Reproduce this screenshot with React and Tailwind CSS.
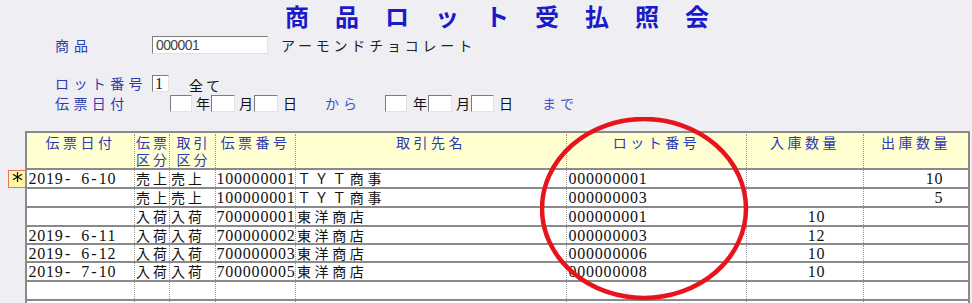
import React from "react";

const rows = [
  { d: "2019- 6-10", k1: "売上", k2: "売上", no: "100000001", name: "ＴＹＴ商事", lot: "000000001", qin: "", qout: "10", h: "h-[19px]" },
  { d: "", k1: "売上", k2: "売上", no: "100000001", name: "ＴＹＴ商事", lot: "000000003", qin: "", qout: "5", h: "h-[19px]" },
  { d: "", k1: "入荷", k2: "入荷", no: "700000001", name: "東洋商店", lot: "000000001", qin: "10", qout: "", h: "h-[19px]" },
  { d: "2019- 6-11", k1: "入荷", k2: "入荷", no: "700000002", name: "東洋商店", lot: "000000003", qin: "12", qout: "", h: "h-[18px]" },
  { d: "2019- 6-12", k1: "入荷", k2: "入荷", no: "700000003", name: "東洋商店", lot: "000000006", qin: "10", qout: "", h: "h-[18px]" },
  { d: "2019- 7-10", k1: "入荷", k2: "入荷", no: "700000005", name: "東洋商店", lot: "000000008", qin: "10", qout: "", h: "h-[19px]" },
  { d: "", k1: "", k2: "", no: "", name: "", lot: "", qin: "", qout: "", h: "h-[19px]" },
  { d: "", k1: "", k2: "", no: "", name: "", lot: "", qin: "", qout: "", h: "h-[19px]" },
];

function Mono({ text }) {
  return (
    <span className="inline-flex font-['Liberation_Serif','Noto_Sans_CJK_JP',serif] text-[16px] leading-[17px] text-[#111]">
      {[...text].map((c, i) => (
        <span key={i} className="inline-block w-[8.8px] text-center">
          {c === " " ? "\u00a0" : c}
        </span>
      ))}
    </span>
  );
}

function Box({ w, children }) {
  return (
    <div
      className={`${w} shrink-0 h-full bg-white border border-[#e2e2e2] border-t-[#7c7c7c] border-l-[#7c7c7c] flex items-center overflow-hidden`}
    >
      {children}
    </div>
  );
}

const col = [
  "w-[108px]",
  "w-[35px]",
  "w-[46px]",
  "w-[80px]",
  "w-[271px]",
  "w-[180px]",
  "w-[117px]",
  "w-[104px]",
];
const sep = "shrink-0 border-r border-dotted border-[#9a9a9a]";
const cjk = "tracking-[3.6px] whitespace-nowrap";

function TwoLine({ a, b }) {
  return (
    <div className="flex flex-col items-center tracking-[3px] whitespace-nowrap pl-[2px]">
      <span className="h-[17px]">{a}</span>
      <span className="h-[17px]">{b}</span>
    </div>
  );
}

export default function App() {
  return (
    <div className="relative w-[972px] h-[303px] overflow-hidden bg-[#efeff3] font-['Noto_Sans_CJK_JP',sans-serif]">
      {/* Title */}
      <div className="h-[36px] pl-[285px] pt-[1px] text-[24px] leading-[30px] tracking-[26px] font-bold text-[#1a1ac8]">
        商品ロット受払照会
      </div>

      {/* 商品 */}
      <div className="flex items-center h-[18px]">
        <span className="ml-[55px] w-[97px] shrink-0 text-[14px] tracking-[5px] text-[#2c3cb0]">商品</span>
        <Box w="w-[116px]">
          <span className="pl-[3px] font-['Liberation_Sans',sans-serif] text-[14px] tracking-[-0.6px] text-[#444]">000001</span>
        </Box>
        <span className="ml-[13px] text-[14px] tracking-[3.8px] text-[#222] whitespace-nowrap">アーモンドチョコレート</span>
      </div>

      {/* ロット番号 */}
      <div className="flex items-center h-[17px] mt-[21px]">
        <span className="ml-[55px] w-[97px] shrink-0 text-[14px] tracking-[4.4px] text-[#2c3cb0] whitespace-nowrap">ロット番号</span>
        <Box w="w-[17px]">
          <span className="pl-[2px] font-['Liberation_Serif',serif] text-[16px] text-[#222]">1</span>
        </Box>
        <span className="ml-[20px] mt-[3px] text-[14px] leading-[16px] tracking-[3px] text-[#111]">全て</span>
      </div>

      {/* 伝票日付 */}
      <div className="flex items-center h-[17px] mt-[3px] text-[14px] text-[#111]">
        <span className="ml-[55px] w-[115px] shrink-0 tracking-[4.4px] text-[#2c3cb0] whitespace-nowrap">伝票日付</span>
        <Box w="w-[22px]" />
        <span className="w-[19px] shrink-0 pl-[4px]">年</span>
        <Box w="w-[24px]" />
        <span className="w-[19px] shrink-0 pl-[4px]">月</span>
        <Box w="w-[24px]" />
        <span className="w-[47px] shrink-0 pl-[5px]">日</span>
        <span className="w-[60px] shrink-0 tracking-[4px] text-[#4454c4]">から</span>
        <Box w="w-[22px]" />
        <span className="w-[21px] shrink-0 pl-[6px]">年</span>
        <Box w="w-[24px]" />
        <span className="w-[19px] shrink-0 pl-[4px]">月</span>
        <Box w="w-[23px]" />
        <span className="w-[48px] shrink-0 pl-[5px]">日</span>
        <span className="tracking-[4px] text-[#4454c4]">まで</span>
      </div>

      {/* Table area */}
      <div className="flex mt-[19px]">
        <div className="w-[25px] shrink-0 pl-[8px] pt-[39px]">
          <div className="w-[18px] h-[18px] bg-[#fff6a6] border border-[#e0785a] flex justify-center items-start pt-[1px]">
            <svg width="11" height="10" viewBox="0 0 11 10">
              <g stroke="#111" strokeWidth="1.2" strokeLinecap="round">
                <line x1="5.5" y1="0.6" x2="5.5" y2="9.4" />
                <line x1="1.3" y1="2.6" x2="9.7" y2="7.4" />
                <line x1="1.3" y1="7.4" x2="9.7" y2="2.6" />
              </g>
            </svg>
          </div>
        </div>
        <div className="w-[945px] shrink-0 border-l-2 border-t-2 border-r-2 border-[#8a8a8a]">
          {/* header */}
          <div className="flex h-[37px] bg-[#ffffd2] border-b-2 border-[#8a8a8a] text-[14px] leading-[17px] text-[#2b3ab0] pt-[1px]">
            <div className={`${col[0]} ${sep} text-center tracking-[3.5px] whitespace-nowrap`}>伝票日付</div>
            <div className={`${col[1]} ${sep}`}><TwoLine a="伝票" b="区分" /></div>
            <div className={`${col[2]} ${sep}`}><TwoLine a="取引" b="区分" /></div>
            <div className={`${col[3]} ${sep} text-center tracking-[3.5px] whitespace-nowrap`}>伝票番号</div>
            <div className={`${col[4]} ${sep} text-center tracking-[3.5px] whitespace-nowrap`}>取引先名</div>
            <div className={`${col[5]} ${sep} text-center tracking-[3.5px] whitespace-nowrap`}>ロット番号</div>
            <div className={`${col[6]} ${sep} text-center tracking-[3.5px] whitespace-nowrap`}>入庫数量</div>
            <div className={`${col[7]} shrink-0 text-center tracking-[3.5px] whitespace-nowrap`}>出庫数量</div>
          </div>
          {/* rows */}
          {rows.map((r, i) => (
            <div key={i} className={`flex ${r.h} bg-white border-b-2 border-[#8a8a8a] text-[14px] leading-[17px] text-[#111]`}>
              <div className={`${col[0]} ${sep} flex items-center pl-[1px]`}><Mono text={r.d} /></div>
              <div className={`${col[1]} ${sep} flex items-center tracking-[3px] whitespace-nowrap pl-[1px]`}>{r.k1}</div>
              <div className={`${col[2]} ${sep} flex items-center tracking-[3px] whitespace-nowrap pl-[1px]`}>{r.k2}</div>
              <div className={`${col[3]} ${sep} flex items-center`}><Mono text={r.no} /></div>
              <div className={`${col[4]} ${sep} flex items-center pl-[1px] ${cjk}`}>{r.name}</div>
              <div className={`${col[5]} ${sep} flex items-center pl-[1px]`}><Mono text={r.lot} /></div>
              <div className={`${col[6]} ${sep} flex items-center justify-end pr-[38px]`}><Mono text={r.qin} /></div>
              <div className={`${col[7]} shrink-0 flex items-center justify-end pr-[25px]`}><Mono text={r.qout} /></div>
            </div>
          ))}
        </div>
      </div>

      {/* Red annotation ellipse */}
      <svg className="absolute left-[540px] top-[117px] pointer-events-none" width="209" height="184" viewBox="0 0 209 184">
        <ellipse cx="104" cy="91.5" rx="102" ry="89.5" fill="none" stroke="#e8141c" strokeWidth="4.5" />
      </svg>
    </div>
  );
}
